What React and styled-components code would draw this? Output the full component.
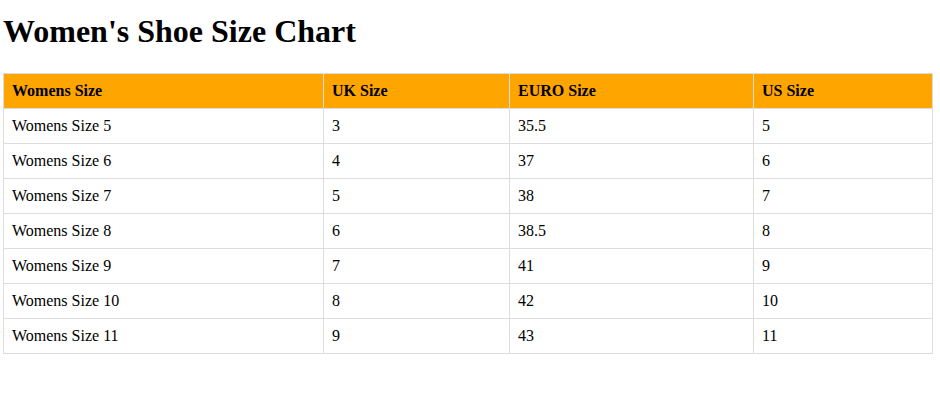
import React from "react";
import styled, { createGlobalStyle } from "styled-components";

const Global = createGlobalStyle`
  html, body { margin: 0; padding: 0; background: #fff; }
  body { font-family: "Liberation Serif", "Times New Roman", serif; color: #000; }
`;

const Page = styled.div`
  padding: 0 3px;
`;

const Title = styled.h1`
  margin: 13px 0 23px;
  font-size: 32px;
  line-height: 37px;
  font-weight: bold;
`;

const Table = styled.table`
  border-collapse: collapse;
  table-layout: fixed;
  width: 929px;
  font-size: 16px;
  line-height: 18px;
`;

const Col = styled.col`
  width: ${(p) => p.$w}px;
`;

const HeadCell = styled.th`
  background: #ffa500;
  border: 1px solid #ddd;
  padding: 8px;
  text-align: left;
  font-weight: bold;
  font-size: 16px;
`;

const Cell = styled.td`
  border: 1px solid #ddd;
  padding: 8px;
  text-align: left;
`;

const rows = [
  ["Womens Size 5", "3", "35.5", "5"],
  ["Womens Size 6", "4", "37", "6"],
  ["Womens Size 7", "5", "38", "7"],
  ["Womens Size 8", "6", "38.5", "8"],
  ["Womens Size 9", "7", "41", "9"],
  ["Womens Size 10", "8", "42", "10"],
  ["Womens Size 11", "9", "43", "11"],
];

export default function App() {
  return (
    <Page>
      <Global />
      <Title>Women's Shoe Size Chart</Title>
      <Table>
        <colgroup>
          <Col $w={320} />
          <Col $w={186} />
          <Col $w={244} />
          <Col $w={179} />
        </colgroup>
        <thead>
          <tr>
            <HeadCell>Womens Size</HeadCell>
            <HeadCell>UK Size</HeadCell>
            <HeadCell>EURO Size</HeadCell>
            <HeadCell>US Size</HeadCell>
          </tr>
        </thead>
        <tbody>
          {rows.map((r) => (
            <tr key={r[0]}>
              {r.map((c, i) => (
                <Cell key={i}>{c}</Cell>
              ))}
            </tr>
          ))}
        </tbody>
      </Table>
    </Page>
  );
}
